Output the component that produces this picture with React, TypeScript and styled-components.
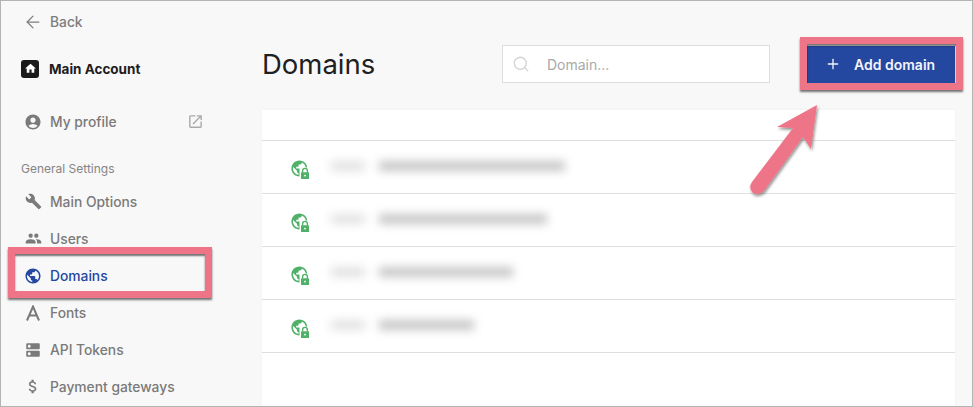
import React from "react";
import styled, { createGlobalStyle } from "styled-components";
import { ArrowLeft, Plus, Search } from "lucide-react";
import { MdAccountCircle, MdAttachMoney, MdBuild, MdDns, MdHome, MdOpenInNew, MdPeople, MdPublic } from "react-icons/md";

const Global = createGlobalStyle`
  html, body { margin: 0; padding: 0; background: #f8f8f8; }
  body { font-family: Inter, "Liberation Sans", sans-serif; overflow: hidden; }
`;

const Page = styled.div`
  position: relative;
  box-sizing: border-box;
  width: 973px;
  height: 407px;
  display: flex;
  background: #f8f8f8;
  border: 1px solid #b4b4b4;
  overflow: hidden;
`;

const Sidebar = styled.aside`
  width: 261px;
  flex: none;
  display: flex;
  flex-direction: column;
  padding: 11px 0 0 20px;
  box-sizing: border-box;
`;

const BackLink = styled.div`
  height: 20px;
  display: flex;
  align-items: center;
  gap: 7px;
  padding-left: 2px;
  color: #7d7d7d;
  font-size: 13.8px;
  font-weight: 500;
`;

const Account = styled.div`
  display: flex;
  align-items: center;
  gap: 10px;
  margin-top: 27px;
  height: 19px;
  font-size: 13.5px;
  font-weight: 700;
  color: #1d1d1d;
`;

const AccountBadge = styled.span`
  width: 18px;
  height: 18px;
  border-radius: 3px;
  background: #1a1a1a;
  color: #fff;
  display: flex;
  align-items: center;
  justify-content: center;
`;

const NavItem = styled.div<{ $active?: boolean }>`
  height: 37px;
  display: flex;
  align-items: center;
  gap: 8px;
  padding-left: 3px;
  width: 182px;
  font-size: 13.8px;
  font-weight: 500;
  color: ${(p) => (p.$active ? "#24479f" : "#7a7a7a")};
`;

const ProfileItem = styled(NavItem)`
  margin-top: 25px;
`;

const IconSlot = styled.span`
  width: 18px;
  height: 18px;
  flex: none;
  display: flex;
  align-items: center;
  justify-content: center;
`;

const ExternalIcon = styled.span`
  margin-left: auto;
  margin-right: 2px;
  color: #aaa;
  display: flex;
`;

const SectionLabel = styled.div`
  margin-top: 21px;
  margin-bottom: 7px;
  height: 15px;
  line-height: 15px;
  font-size: 12px;
  color: #858585;
`;

const Main = styled.main`
  flex: 1;
  display: flex;
  flex-direction: column;
  padding: 44px 17px 0 0;
  min-width: 0;
`;

const Header = styled.div`
  display: flex;
  align-items: center;
  height: 38px;
`;

const Title = styled.h1`
  margin: 0;
  width: 240px;
  font-size: 27.5px;
  font-weight: 400;
  color: #202020;
`;

const SearchBox = styled.div`
  box-sizing: border-box;
  width: 268px;
  height: 38px;
  background: #fff;
  border: 1px solid #dedede;
  display: flex;
  align-items: center;
  padding-left: 9px;
  gap: 17px;
  font-size: 14px;
  color: #a9a9a9;
`;

const AddButton = styled.button`
  margin-left: auto;
  box-sizing: border-box;
  width: 148px;
  height: 37px;
  border: 0;
  background: #24479f;
  color: #f2f4fa;
  font: 600 14px Inter, "Liberation Sans", sans-serif;
  display: flex;
  align-items: center;
  gap: 13px;
  padding: 0 0 0 18px;
`;

const Card = styled.section`
  margin-top: 27px;
  flex: 1;
  background: #fff;
  box-shadow: 0 0 3px rgba(0, 0, 0, 0.04);
`;

const CardHead = styled.div`
  height: 30px;
  border-bottom: 1px solid #dfdfdf;
`;

const Row = styled.div`
  box-sizing: border-box;
  height: 53px;
  border-bottom: 1px solid #dfdfdf;
  display: flex;
  align-items: center;
  padding: 5px 0 0 29px;
  gap: 20px;
`;

const BlurGroup = styled.div`
  display: flex;
  gap: 14px;
  align-items: center;
  margin-top: -7px;
  filter: blur(5px);
`;

const BlurBar = styled.span<{ $w: number; $faint?: boolean }>`
  display: block;
  width: ${(p) => p.$w}px;
  height: 10px;
  background: ${(p) => (p.$faint ? "#e2e2e2" : "#c6c6c6")};
`;

const Highlight = styled.div<{ $x: number; $y: number; $w: number; $h: number }>`
  position: absolute;
  left: ${(p) => p.$x}px;
  top: ${(p) => p.$y}px;
  width: ${(p) => p.$w}px;
  height: ${(p) => p.$h}px;
  box-sizing: border-box;
  border: 7px solid #ee7488;
  box-shadow: 0 2px 2px rgba(0, 0, 0, 0.55), inset 0 2px 2px rgba(0, 0, 0, 0.55);
  pointer-events: none;
`;

const ArrowOverlay = styled.svg`
  position: absolute;
  left: 739px;
  top: 94px;
  overflow: visible;
`;

const LetterA = () => (
  <svg width="16" height="16" viewBox="0 0 16 16" fill="none" stroke="#7a7a7a" strokeWidth="2">
    <path d="M2 15.500 L8 1.500 L14 15.500 M4.200 10.500 H11.800" />
  </svg>
);

const SecureGlobe = () => (
  <svg width="20" height="20" viewBox="0 0 20 20">
    <g transform="scale(0.8) translate(-1.500,-1.500)">
      <path fill="#4fb068" d="M12 2C6.48 2 2 6.48 2 12s4.48 10 10 10 10-4.48 10-10S17.52 2 12 2zm-1 17.93c-3.95-.49-7-3.85-7-7.93 0-.62.08-1.21.21-1.79L9 15v1c0 1.1.9 2 2 2v1.93zm6.9-2.54c-.26-.81-1-1.39-1.9-1.39h-1v-3c0-.55-.45-1-1-1H8v-2h2c.55 0 1-.45 1-1V7h2c1.1 0 2-.9 2-2v-.41c2.93 1.19 5 4.06 5 7.41 0 2.08-.8 3.97-2.1 5.39z" />
    </g>
    <rect x="8.5" y="7.500" width="11.5" height="12.500" fill="#fff" />
    <path fill="none" stroke="#4fb068" strokeWidth="1.4" d="M11.6 12.5 V10.8 a2.4 2.4 0 0 1 4.8 0 V12.5" />
    <rect x="10" y="12.2" width="8" height="6.8" rx="0.6" fill="#4fb068" />
    <rect x="13.2" y="14.8" width="1.6" height="1.6" fill="#fff" />
  </svg>
);

const rows: number[] = [186, 168, 134, 95];

const nav = [
  { label: "Main Options", icon: <MdBuild size={17} color="#7a7a7a" /> },
  { label: "Users", icon: <MdPeople size={17} color="#7a7a7a" /> },
  { label: "Domains", icon: <MdPublic size={18} color="#24479f" />, active: true },
  { label: "Fonts", icon: <LetterA /> },
  { label: "API Tokens", icon: <MdDns size={20} color="#7a7a7a" /> },
  { label: "Payment gateways", icon: <MdAttachMoney size={21} color="#7a7a7a" /> },
];

export default function App() {
  return (
    <Page>
      <Global />
      <Sidebar>
        <BackLink>
          <ArrowLeft size={20} strokeWidth={1.5} />
          Back
        </BackLink>
        <Account>
          <AccountBadge>
            <MdHome size={13} />
          </AccountBadge>
          Main Account
        </Account>
        <ProfileItem>
          <IconSlot>
            <MdAccountCircle size={18} color="#7a7a7a" />
          </IconSlot>
          My profile
          <ExternalIcon>
            <MdOpenInNew size={17} />
          </ExternalIcon>
        </ProfileItem>
        <SectionLabel>General Settings</SectionLabel>
        {nav.map((n) => (
          <NavItem key={n.label} $active={n.active}>
            <IconSlot>{n.icon}</IconSlot>
            {n.label}
          </NavItem>
        ))}
      </Sidebar>
      <Main>
        <Header>
          <Title>Domains</Title>
          <SearchBox>
            <Search size={18} color="#d4d4d4" strokeWidth={1.7} />
            Domain...
          </SearchBox>
          <AddButton>
            <Plus size={16} strokeWidth={2} />
            Add domain
          </AddButton>
        </Header>
        <Card>
          <CardHead />
          {rows.map((w, i) => (
            <Row key={i}>
              <SecureGlobe />
              <BlurGroup>
                <BlurBar $w={34} $faint />
                <BlurBar $w={w} />
              </BlurGroup>
            </Row>
          ))}
        </Card>
      </Main>
      <Highlight $x={7} $y={246} $w={204} $h={51} />
      <Highlight $x={799} $y={36} $w={163} $h={53} />
      <ArrowOverlay width="90" height="110" viewBox="0 0 90 110">
        <defs>
          <filter id="arrowShadow" x="-20%" y="-20%" width="150%" height="150%">
            <feDropShadow dx="1" dy="2" stdDeviation="1.5" floodColor="#000" floodOpacity="0.45" />
          </filter>
        </defs>
        <path
          filter="url(#arrowShadow)"
          fill="#ee7488"
          d="M77 10 L71 54 L63 42 L24 96 Q18 101 13 98 Q8 93 12 87 L53 33 L37 32 Z"
        />
      </ArrowOverlay>
    </Page>
  );
}
